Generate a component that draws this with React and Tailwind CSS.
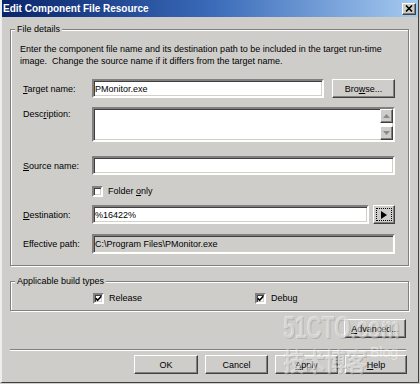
import React from 'react'

const sunken = 'border-2 border-t-[#808080] border-l-[#808080] border-r-white border-b-white shadow-[inset_1px_1px_0_#404040,inset_-1px_-1px_0_#d4d0c8]'
const raised = 'border border-t-white border-l-white border-r-[#404040] border-b-[#404040] shadow-[inset_-1px_-1px_0_#808080] bg-[#cecdca]'
const etched = 'border border-[#808080] shadow-[1px_1px_0_#fff,inset_1px_1px_0_#fff]'

const U = ({ children }) => <span className='underline underline-offset-[1px]'>{children}</span>

const Check = ({ checked }) => (
  <span className={`${sunken} w-[11px] h-[11px] bg-white flex items-center justify-center shrink-0`}>
    {checked && (
      <svg width='7' height='7' viewBox='0 0 7 7'>
        <path d='M0.8 3.2 L2.6 5.2 L6.3 1.2' fill='none' stroke='#000' strokeWidth='1.6' />
      </svg>
    )}
  </span>
)

const Btn = ({ children, className = '' }) => (
  <button type='button' className={`${raised} h-[19px] flex items-center justify-center ${className}`}>
    {children}
  </button>
)

const GroupTitle = ({ children }) => (
  <span className='self-start -mt-[7px] ml-[4px] px-[2px] leading-[12px] bg-[#cecdca]'>{children}</span>
)

const ScrollBtn = ({ up }) => (
  <span className={`${raised} w-[13px] h-[14px] flex items-center justify-center`}>
    <svg width='7' height='4' viewBox='0 0 7 4'>
      <path d={up ? 'M0 4 L3.5 0 L7 4 Z' : 'M0 0 L3.5 4 L7 0 Z'} fill='#8a8a8a' />
    </svg>
  </span>
)

export default function App() {
  return (
    <div className="relative w-[420px] h-[384px] bg-[#cecdca] overflow-hidden font-['Liberation_Sans',Arial,sans-serif] text-[9px] leading-[12px] text-black">
      <div className='w-[419px] h-[383px] border-r border-b border-r-[#404040] border-b-[#404040] border-l-2 border-l-[#eeeeee] flex flex-col'>
        {/* title bar */}
        <div className='h-[17px] flex items-center bg-gradient-to-r from-[#0a246a] via-[#3a6ab8] to-[#a6caf0] pl-[1px] pr-[2px]'>
          <span className='text-white font-bold text-[10px] leading-[12px] flex-1'>Edit Component File Resource</span>
          <span className={`${raised} w-[14px] h-[12px] flex items-center justify-center`}>
            <svg width='8' height='7' viewBox='0 0 8 7'>
              <path d='M1 0.5 L7 6.5 M7 0.5 L1 6.5' stroke='#000' strokeWidth='1.6' />
            </svg>
          </span>
        </div>

        <div className='flex flex-col pl-[8px]'>
          {/* File details */}
          <div className={`${etched} mt-[12px] w-[399px] flex flex-col pb-[11px]`}>
            <GroupTitle>File details</GroupTitle>
            <p className='mt-[8px] pl-[9px]'>
              Enter the component file name and its destination path to be included in the target run-time
              <br />
              image.&nbsp; Change the source name if it differs from the target name.
            </p>

            <div className='flex items-center mt-[12px] pl-[12px]'>
              <span className='w-[69px]'><U>T</U>arget name:</span>
              <div className={`${sunken} w-[232px] h-[19px] bg-white flex items-center pl-[1px]`}>PMonitor.exe</div>
              <Btn className='ml-[8px] w-[63px]'>Bro<U>w</U>se...</Btn>
            </div>

            <div className='flex items-start mt-[9px] pl-[12px]'>
              <span className='w-[69px] pt-[1px]'>Desc<U>r</U>iption:</span>
              <div className={`${sunken} w-[303px] h-[35px] bg-white flex justify-end`}>
                <div className='flex flex-col justify-between w-[13px]'>
                  <ScrollBtn up />
                  <ScrollBtn />
                </div>
              </div>
            </div>

            <div className='flex items-center mt-[14px] pl-[12px]'>
              <span className='w-[69px]'><U>S</U>ource name:</span>
              <div className={`${sunken} w-[303px] h-[19px] bg-white`} />
            </div>

            <div className='flex items-center mt-[10px] pl-[81px] gap-[5px]'>
              <Check />
              <span>Folder <U>o</U>nly</span>
            </div>

            <div className='flex items-center mt-[8px] pl-[12px]'>
              <span className='w-[69px]'><U>D</U>estination:</span>
              <div className={`${sunken} w-[277px] h-[19px] bg-white flex items-center pl-[1px]`}>%16422%</div>
              <Btn className='ml-[4px] w-[22px]'>
                <span className='w-[16px] h-[13px] border border-dotted border-black flex items-center justify-center'>
                  <svg width='6' height='8' viewBox='0 0 6 8'>
                    <path d='M0 0 L6 4 L0 8 Z' fill='#000' />
                  </svg>
                </span>
              </Btn>
            </div>

            <div className='flex items-center mt-[10px] pl-[12px]'>
              <span className='w-[69px]'>Effective path:</span>
              <div className={`${sunken} w-[303px] h-[20px] bg-[#cecdca] flex items-center pl-[1px]`}>C:\Program Files\PMonitor.exe</div>
            </div>
          </div>

          {/* Applicable build types */}
          <div className={`${etched} mt-[15px] w-[399px] flex flex-col pb-[6px]`}>
            <GroupTitle>Applicable build types</GroupTitle>
            <div className='flex items-center mt-[5px]'>
              <div className='flex items-center gap-[5px] pl-[82px] w-[244px]'>
                <Check checked />
                <span>Release</span>
              </div>
              <div className='flex items-center gap-[5px]'>
                <Check checked />
                <span>Debug</span>
              </div>
            </div>
          </div>

          <div className='flex justify-end w-[396px] mt-[8px]'>
            <Btn className='w-[62px]'><U>A</U>dvanced...</Btn>
          </div>

          <div className='mt-[11px] w-[396px] h-[2px] border-t border-t-[#808080] border-b border-b-white' />

          <div className='flex justify-end gap-[7px] w-[397px] mt-[4px]'>
            <Btn className='w-[64px]'>OK</Btn>
            <Btn className='w-[63px]'>Cancel</Btn>
            <Btn className='w-[63px]'><U>A</U>pply</Btn>
            <Btn className='w-[62px]'><U>H</U>elp</Btn>
          </div>
        </div>
      </div>

      {/* watermark */}
      <div className='absolute left-[283px] top-[312px] pointer-events-none select-none flex flex-col text-white/45'>
        <span className='block h-[30px] font-bold text-[21px] leading-[20px] origin-top-left scale-y-[1.5] [text-shadow:1px_1px_0_rgba(110,110,110,0.3)]'>51CTO.com</span>
        <span className='flex items-start gap-[3px] mt-[4px]'>
          <span className="block font-['Noto_Sans_CJK_SC',sans-serif] font-bold text-[21px] leading-[24px] origin-top-left scale-y-[1.2] [text-shadow:1px_1px_0_rgba(110,110,110,0.3)]">技术博客</span>
          <span className='block text-[14px] leading-[16px] -mt-[2px]'>Blog</span>
        </span>
      </div>
    </div>
  )
}
